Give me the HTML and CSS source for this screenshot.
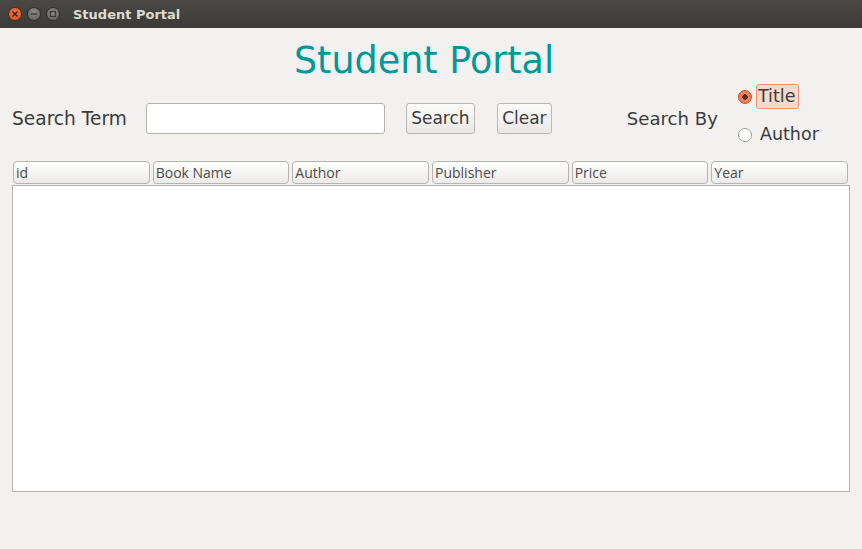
FILE: index.html
```html
<!DOCTYPE html>
<html>
<head>
<meta charset="utf-8">
<link rel="stylesheet" href="styles.css">
</head>
<body>
<div class="titlebar">
  <div class="controls">
    <span class="wbtn close"><svg width="8" height="8" viewBox="0 0 8 8"><path d="M1.5 1.5 L6.5 6.5 M6.5 1.5 L1.5 6.5" stroke="#3a1a10" stroke-width="1.4"/></svg></span>
    <span class="wbtn"><svg width="8" height="8" viewBox="0 0 8 8"><path d="M1 4 H7" stroke="#3c3b37" stroke-width="1.4"/></svg></span>
    <span class="wbtn"><svg width="8" height="8" viewBox="0 0 8 8"><rect x="1.5" y="1.5" width="5" height="5" fill="none" stroke="#3c3b37" stroke-width="1.2"/></svg></span>
  </div>
  <span class="wtitle">Student Portal</span>
</div>
<div class="content">
  <h1 class="heading">Student Portal</h1>
  <div class="searchrow">
    <span class="label lbl-term">Search Term</span>
    <input class="field" type="text">
    <button class="btn btn-search">Search</button>
    <button class="btn btn-clear">Clear</button>
    <span class="label lbl-by">Search By</span>
    <div class="radios">
      <div class="radio sel"><span class="dot on"></span><span class="rtext focus">Title</span></div>
      <div class="radio"><span class="dot"></span><span class="rtext">Author</span></div>
    </div>
  </div>
  <div class="table">
    <div class="thead">
      <div class="th">id</div>
      <div class="th">Book Name</div>
      <div class="th">Author</div>
      <div class="th">Publisher</div>
      <div class="th">Price</div>
      <div class="th">Year</div>
    </div>
    <div class="tbody"></div>
  </div>
</div>
</body>
</html>
```
FILE: styles.css
```css
* { box-sizing: border-box; }
html, body { margin: 0; padding: 0; }
body {
  width: 862px; height: 549px; overflow: hidden;
  background: #f2f1f0;
  font-family: "DejaVu Sans", sans-serif;
  color: #3c3c3c;
}
.titlebar {
  height: 28px;
  background: linear-gradient(#4a4944, #3c3b37);
  display: flex; align-items: center;
  padding-left: 8px;
}
.controls { display: flex; gap: 5px; align-items: center; }
.wbtn {
  width: 14px; height: 14px; border-radius: 50%;
  background: radial-gradient(circle at 50% 35%, #8a8984, #5f5e5a);
  border: 1px solid #2f2e2b;
  display: flex; align-items: center; justify-content: center;
}
.wbtn.close { background: radial-gradient(circle at 50% 35%, #f3774e, #dd4a1c); border-color: #5a2a18; }
.wtitle {
  margin-left: 13px;
  color: #dfdbd2; font-weight: bold; font-size: 13px;
}
.content { padding: 0 12px 0 12px; }
.heading {
  margin: 12px 0 0 0;
  text-align: center;
  font-weight: normal;
  font-size: 36.5px;
  line-height: 42px;
  color: #009898;
  padding-right: 14px;
}
.searchrow {
  display: flex; align-items: center;
  height: 72px;
}
.label { font-size: 18.6px; color: #3c3c3c; white-space: nowrap; }
.field {
  margin-left: 19px;
  width: 239px; height: 31px;
  border: 1px solid #b5b3ae; border-radius: 3px;
  background: #fff;
  flex: none;
}
.btn {
  height: 31px;
  font-family: "DejaVu Sans", sans-serif;
  font-size: 17px; color: #3c3c3c;
  border: 1px solid #b9b7b2; border-radius: 3px;
  background: linear-gradient(#fbfbfa, #e9e8e6);
  padding: 0 2px;
  flex: none;
}
.btn-search { margin-left: 21px; width: 69px; }
.btn-clear { margin-left: 22px; width: 55px; }
.lbl-by { margin-left: 75px; font-size: 18.1px; }
.radios { margin-left: 20px; display: flex; flex-direction: column; gap: 13px; margin-top: -5px; }
.radio { display: flex; align-items: center; gap: 5px; }
.radio.sel { gap: 4px; }
.dot {
  width: 14px; height: 14px; border-radius: 50%;
  border: 1px solid #9e9c98;
  background: #fff;
  flex: none;
}
.dot.on {
  border-color: #c9502c;
  background: radial-gradient(circle, #5a2a1c 0 2.5px, #f08a66 3px, #e26a40 100%);
}
.rtext { font-size: 17.5px; padding: 1px 3px 2px 1px; border: 1px solid transparent; border-radius: 3px; }
.radio:not(.sel) .rtext { padding-left: 2px; }
.rtext.focus { background: #f6d9cd; border-color: #f0926e; }
.table { margin-top: 7px; }
.thead { display: flex; gap: 3px; padding: 0 2px 0 1px; }
.th {
  flex: 1;
  height: 23px;
  border: 1px solid #b6b4af; border-radius: 4px;
  background: linear-gradient(#ffffff, #ebeae8);
  font-family: "Open Sans", sans-serif;
  font-size: 14px; color: #4c4c4c;
  line-height: 21px; padding-left: 2px;
}
.tbody {
  margin-top: 1px;
  height: 307px;
  width: 838px;
  border: 1px solid #b5b5b5;
  background: #fff;
}
```
